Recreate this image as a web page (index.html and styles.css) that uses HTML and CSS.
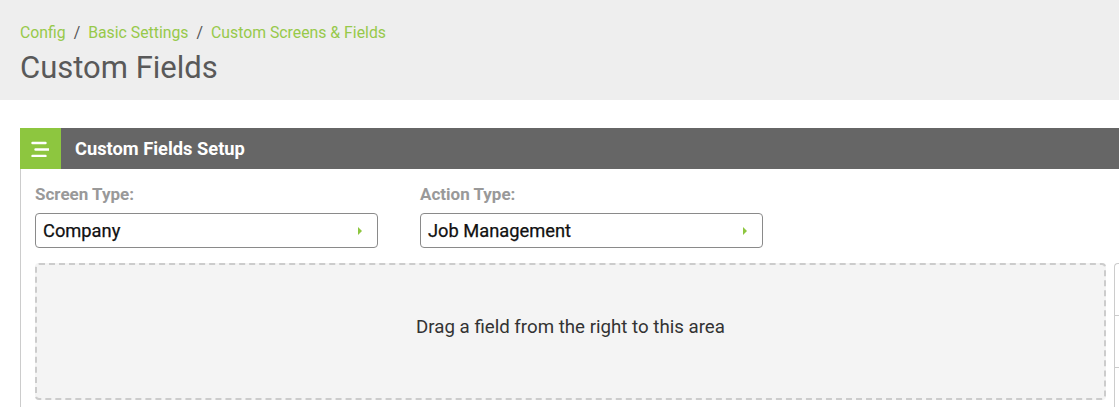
FILE: index.html
```html
<!DOCTYPE html>
<html>
<head>
<meta charset="utf-8">
<link rel="stylesheet" href="styles.css">
</head>
<body>
<header class="page-head">
  <nav class="crumbs">
    <a>Config</a><span class="sep">/</span><a>Basic Settings</a><span class="sep">/</span><a>Custom Screens &amp; Fields</a>
  </nav>
  <h1 class="title">Custom Fields</h1>
</header>
<main class="content">
  <section class="panel">
    <div class="panel-head">
      <div class="panel-icon">
        <svg width="18" height="16" viewBox="0 0 18 16"><path d="M1.5 2h13M4.5 8.5h13M1.5 15h13" stroke="#fff" stroke-width="2.4" stroke-linecap="round" fill="none"/></svg>
      </div>
      <div class="panel-title">Custom Fields Setup</div>
    </div>
    <div class="panel-body">
      <div class="fields">
        <div class="field">
          <label class="lbl">Screen Type:</label>
          <div class="select"><span>Company</span><i class="caret"></i></div>
        </div>
        <div class="field">
          <label class="lbl">Action Type:</label>
          <div class="select"><span>Job Management</span><i class="caret"></i></div>
        </div>
      </div>
      <div class="work">
        <div class="drop">Drag a field from the right to this area</div>
        <div class="side">
          <div class="side-item"></div>
          <div class="side-item"></div>
          <div class="side-item"></div>
        </div>
      </div>
    </div>
  </section>
</main>
</body>
</html>
```
FILE: styles.css
```css
* { box-sizing: border-box; }
html, body { margin: 0; padding: 0; }
body {
  font-family: Roboto, "Liberation Sans", sans-serif;
  background: #fff;
  color: #333;
  width: 1119px;
  height: 407px;
  overflow: hidden;
}
.page-head {
  background: #eeeeee;
  height: 100px;
  padding: 22px 20px 0 20px;
}
.crumbs {
  font-size: 15.8px;
  line-height: 22px;
  color: #8dc63f;
}
.crumbs a { color: #97c94a; }
.crumbs .sep { color: #555; margin: 0 8px; }
.title {
  margin: 6px 0 0 0;
  font-size: 31px;
  line-height: 36px;
  font-weight: 400;
  color: #595959;
}
.content {
  padding: 28px 0 0 20px;
}
.panel {
  width: 1140px;
}
.panel-head {
  display: flex;
  height: 41px;
  background: #666666;
}
.panel-icon {
  width: 41px;
  background: #8dc63f;
  display: flex;
  align-items: center;
  justify-content: center;
  padding-right: 2px;
}
.panel-title {
  color: #fff;
  font-weight: 700;
  font-size: 18.3px;
  line-height: 41px;
  padding-left: 14px;
}
.panel-body {
  border-left: 1px solid #cccccc;
  padding: 15px 0 0 14px;
}
.fields {
  display: flex;
  gap: 42px;
}
.field { width: 343px; }
.lbl {
  display: block;
  font-size: 17px;
  font-weight: 700;
  color: #999;
  line-height: 20px;
  margin-bottom: 9px;
}
.select {
  height: 35px;
  border: 1px solid #8a8a8a;
  border-radius: 4px;
  display: flex;
  align-items: center;
  justify-content: space-between;
  padding: 0 15px 0 7px;
  font-size: 18.3px;
  font-weight: 400;
  color: #111;
  -webkit-text-stroke: 0.25px #111;
}
.caret {
  width: 0; height: 0;
  border-top: 4px solid transparent;
  border-bottom: 4px solid transparent;
  border-left: 4px solid #8dc63f;
}
.work {
  display: flex;
  margin-top: 15px;
  gap: 8px;
}
.drop {
  width: 1071px;
  height: 137px;
  border: 2px dashed #cccccc;
  border-radius: 4px;
  background: #f4f4f4;
  display: flex;
  align-items: center;
  justify-content: center;
  padding-bottom: 10px;
  font-size: 18.7px;
  color: #333;
}
.side {
  flex: 1;
  border-left: 1px solid #cccccc;
  border-top: 1px solid #cccccc;
  border-top-left-radius: 4px;
  height: 160px;
}
.side-item {
  height: 52px;
  border-bottom: 1px solid #cccccc;
}
```
